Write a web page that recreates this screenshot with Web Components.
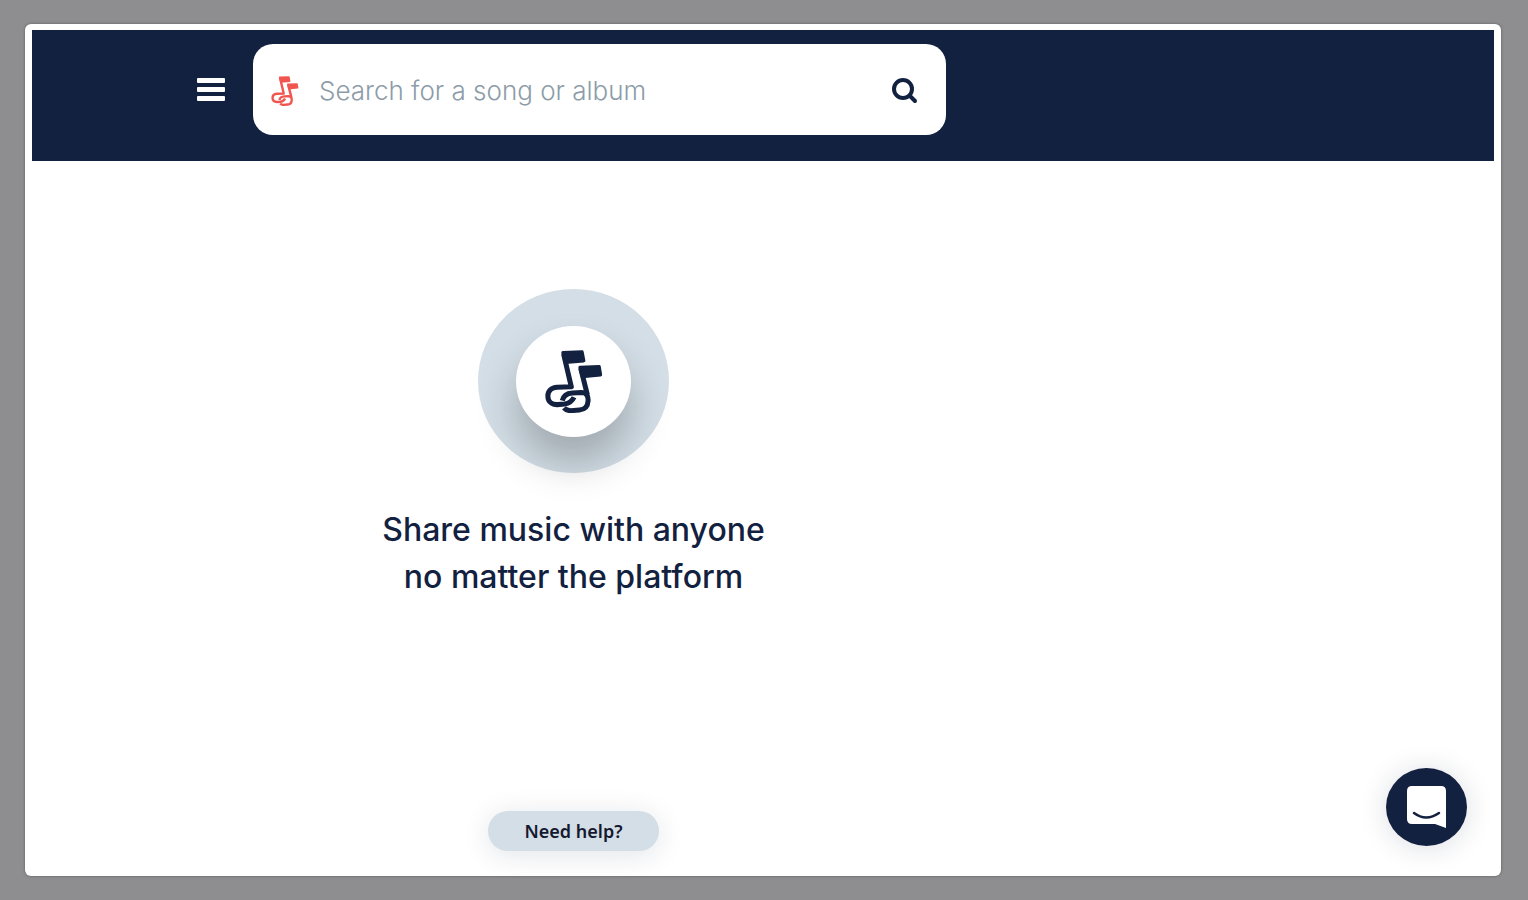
<!DOCTYPE html>
<html lang="en">
<head>
<meta charset="utf-8">
<meta name="viewport" content="width=device-width, initial-scale=1">
<title>Share music</title>
<style>
  html, body { height: 100%; }
  body {
    --navy: #132140;
    --mist: #d3dee6;
    --coral: #f0564f;
    --gutter: 165px;
    --column: 753px;
    margin: 0;
    padding: 24px 27px 24px 25px;
    box-sizing: border-box;
    background: #8e8e90;
    color: var(--navy);
    font-family: Inter, "Liberation Sans", sans-serif;
  }
</style>
</head>
<body>
<app-frame>
  <search-header slot="header" placeholder="Search for a song or album"></search-header>
  <music-hero>Share music with anyone<br>no matter the platform</music-hero>
  <help-button slot="footer">Need help?</help-button>
  <chat-launcher slot="floating"></chat-launcher>
</app-frame>

<script>
class AppFrame extends HTMLElement {
  constructor() {
    super();
    this.attachShadow({ mode: 'open' }).innerHTML = `
      <style>
        :host {
          display: flex;
          flex-direction: column;
          position: relative;
          box-sizing: border-box;
          min-height: 100%;
          padding: 6px 7px;
          background: #fff;
          border-radius: 6px;
          box-shadow: 0 0 3px rgba(0,0,0,0.35);
        }
        main { flex: 1; }
        main, footer {
          box-sizing: border-box;
          width: var(--column);
          max-width: 100%;
          margin-left: var(--gutter);
        }
        footer { padding-bottom: 19px; text-align: center; }
      </style>
      <slot name="header"></slot>
      <main><slot></slot></main>
      <footer><slot name="footer"></slot></footer>
      <slot name="floating"></slot>
    `;
  }
}
customElements.define('app-frame', AppFrame);

// two linked notes, coloured by currentColor
class NoteLogo extends HTMLElement {
  constructor() {
    super();
    this.attachShadow({ mode: 'open' }).innerHTML = `
      <style>
        :host { display: block; }
        svg { display: block; width: 100%; height: 100%; }
      </style>
      <svg viewBox="76 60 172 188" aria-hidden="true" fill="none" stroke="currentColor" stroke-width="15" stroke-linejoin="round">
        <path d="M129 68 L186 66 L191 92 L136 97 Z" fill="currentColor" stroke-width="10"/>
        <path d="M180 112 L237 110 L241 134 L187 139 Z" fill="currentColor" stroke-width="10"/>
        <path d="M131 72 L154 170 L112 171 C94 172 84 182 84 197 C84 214 96 223 112 223 L134 221 C149 219 157 212 162 201"/>
        <path d="M182 114 L202 194"/>
        <path d="M127 211 C130 197 142 189 157 188 L184 187 C200 187 205 198 204 212 C203 230 194 238 178 239 L153 241 C143 241 137 239 132 233"/>
      </svg>
    `;
  }
}
customElements.define('note-logo', NoteLogo);

class SearchHeader extends HTMLElement {
  constructor() {
    super();
    this.attachShadow({ mode: 'open' }).innerHTML = `
      <style>
        :host {
          display: block;
          padding: 14px 0 26px var(--gutter);
          background: var(--navy);
        }
        .bar {
          display: flex;
          align-items: center;
          gap: 28px;
          max-width: 749px;
        }
        button {
          display: block;
          flex: none;
          padding: 0;
          border: 0;
          background: none;
          color: inherit;
          cursor: pointer;
        }
        button svg { display: block; }
        .menu { color: #fff; }
        form {
          display: flex;
          align-items: center;
          flex: 1;
          min-width: 0;
          height: 91px;
          box-sizing: border-box;
          padding: 2px 28px 0 18px;
          background: #fff;
          border-radius: 20px;
        }
        note-logo {
          flex: none;
          width: 28px;
          height: 30px;
          margin-right: 20px;
          color: var(--coral);
        }
        input {
          flex: 1;
          min-width: 0;
          padding: 0;
          border: 0;
          outline: 0;
          background: none;
          color: var(--navy);
          font: 300 26px/36px Inter, sans-serif;
        }
        input::placeholder { color: #8d9ca8; opacity: 1; }
      </style>
      <div class="bar">
        <button class="menu" type="button" aria-label="Menu">
          <svg width="28" height="23" viewBox="0 0 28 23" fill="currentColor">
            <rect width="28" height="5" rx="1"/>
            <rect y="9" width="28" height="5" rx="1"/>
            <rect y="18" width="28" height="5" rx="1"/>
          </svg>
        </button>
        <form role="search">
          <note-logo></note-logo>
          <input type="text" aria-label="Search">
          <button type="submit" aria-label="Submit search">
            <svg width="26" height="26" viewBox="0 0 26 26" fill="none" stroke="currentColor" stroke-width="4" stroke-linecap="round">
              <circle cx="11" cy="11" r="9"/>
              <path d="M18 18 L23 23"/>
            </svg>
          </button>
        </form>
      </div>
    `;
  }

  connectedCallback() {
    const form = this.shadowRoot.querySelector('form');
    this.shadowRoot.querySelector('input').placeholder = this.getAttribute('placeholder') || '';
    form.addEventListener('submit', e => e.preventDefault());
  }
}
customElements.define('search-header', SearchHeader);

class MusicHero extends HTMLElement {
  constructor() {
    super();
    this.attachShadow({ mode: 'open' }).innerHTML = `
      <style>
        :host {
          display: flex;
          flex-direction: column;
          align-items: center;
          gap: 33px;
          padding-top: 128px;
        }
        .ring, .disc {
          display: grid;
          place-items: center;
          border-radius: 50%;
        }
        .ring { width: 191px; height: 184px; background: var(--mist); }
        .disc {
          width: 115px;
          height: 111px;
          background: #fff;
          box-shadow: 0 26px 40px rgba(0,0,0,0.24);
        }
        note-logo { width: 58px; height: 63px; }
        h1 {
          margin: 0;
          font-size: 32px;
          font-weight: 500;
          line-height: 47px;
          text-align: center;
        }
      </style>
      <div class="ring"><div class="disc"><note-logo></note-logo></div></div>
      <h1><slot></slot></h1>
    `;
  }
}
customElements.define('music-hero', MusicHero);

class HelpButton extends HTMLElement {
  constructor() {
    super();
    this.attachShadow({ mode: 'open' }).innerHTML = `
      <style>
        :host { display: block; }
        button {
          min-width: 171px;
          height: 40px;
          padding: 0 24px;
          border: 0;
          border-radius: 20px;
          background: var(--mist);
          box-shadow: 0 4px 28px rgba(20,33,63,0.12);
          color: #15192f;
          font: 600 18px/24px "Noto Sans", sans-serif;
          vertical-align: top;
          cursor: pointer;
        }
      </style>
      <button type="button"><slot></slot></button>
    `;
  }
}
customElements.define('help-button', HelpButton);

class ChatLauncher extends HTMLElement {
  constructor() {
    super();
    this.attachShadow({ mode: 'open' }).innerHTML = `
      <style>
        :host { position: absolute; right: 34px; bottom: 30px; }
        button {
          display: grid;
          place-items: center;
          width: 81px;
          height: 78px;
          padding: 0;
          border: 0;
          border-radius: 50%;
          background: var(--navy);
          box-shadow: 0 2px 28px rgba(20,33,63,0.15);
          color: var(--navy);
          cursor: pointer;
        }
        svg { display: block; }
      </style>
      <button type="button" aria-label="Open chat">
        <svg width="39" height="42" viewBox="0 0 39 42">
          <path d="M5 0 H34 Q39 0 39 5 V42 L28 38 H5 Q0 38 0 33 V5 Q0 0 5 0 Z" fill="#fff"/>
          <path d="M7 27 Q19 36 32 27" fill="none" stroke="currentColor" stroke-width="2.5" stroke-linecap="round"/>
        </svg>
      </button>
    `;
  }
}
customElements.define('chat-launcher', ChatLauncher);
</script>
</body>
</html>
